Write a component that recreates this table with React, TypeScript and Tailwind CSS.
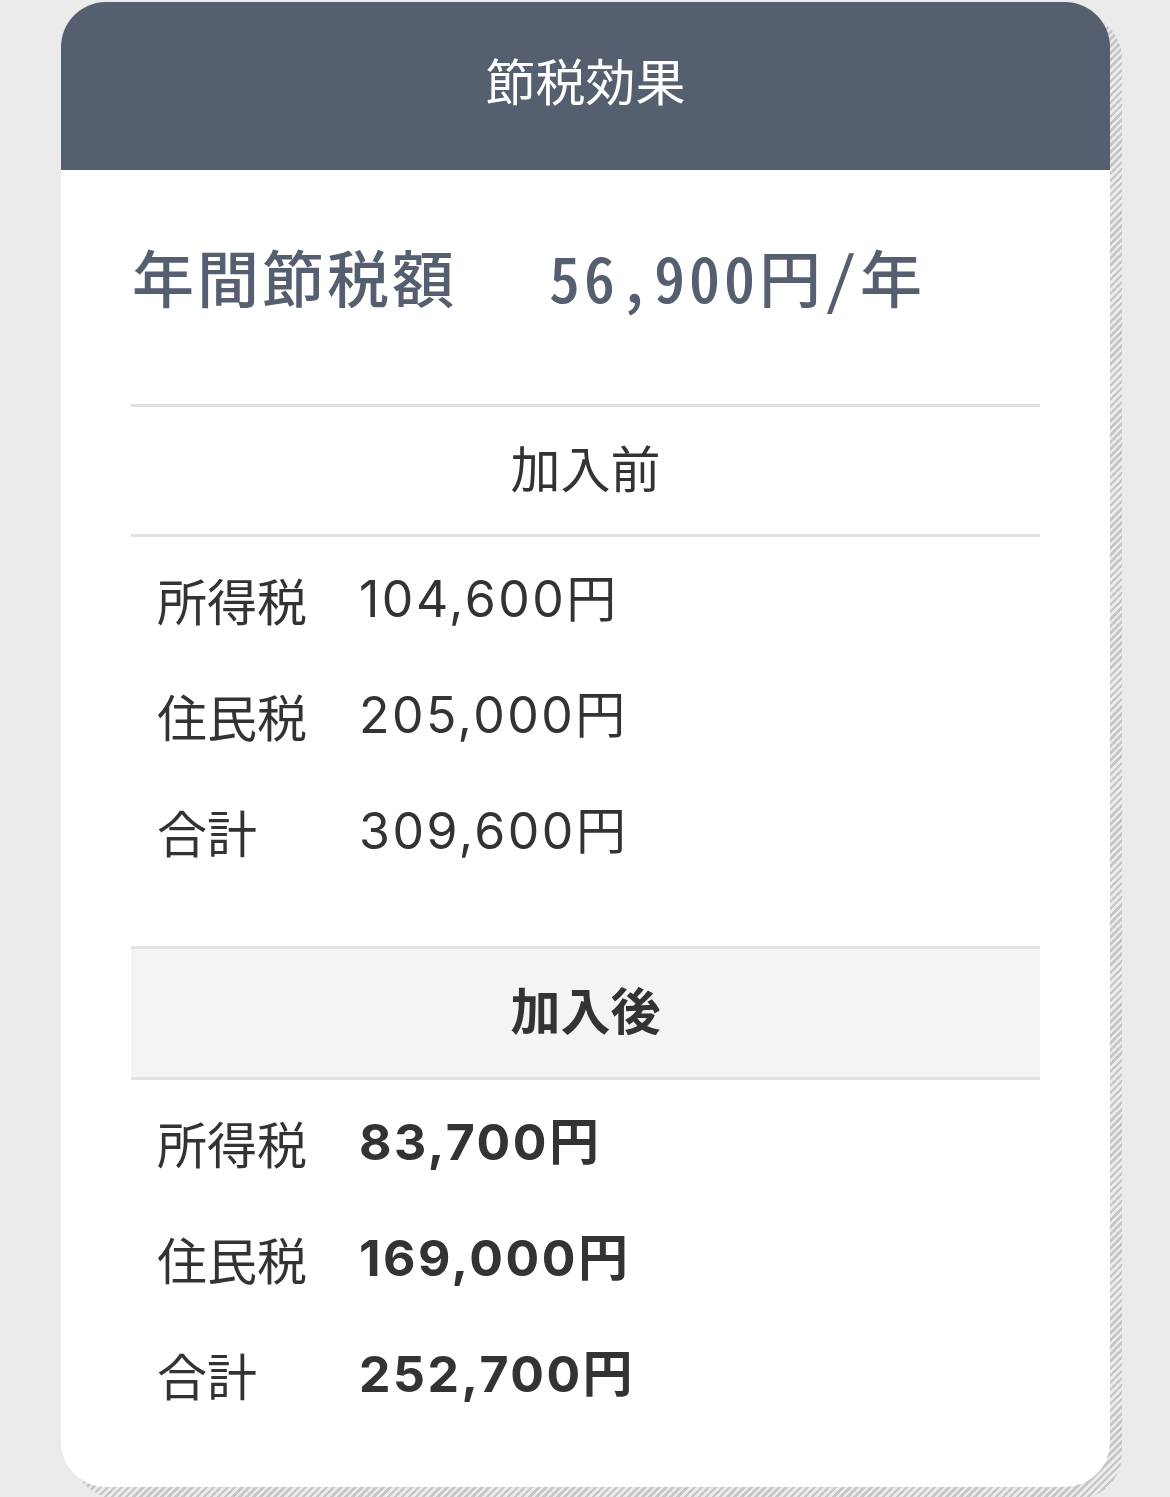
const jp = "font-['Noto_Sans_CJK_JP',sans-serif]";
const num = "font-['Inter','Noto_Sans_CJK_JP',sans-serif]";

type Row = { label: string; value: string };

const before: Row[] = [
  { label: "所得税", value: "104,600円" },
  { label: "住民税", value: "205,000円" },
  { label: "合計", value: "309,600円" },
];

const after: Row[] = [
  { label: "所得税", value: "83,700円" },
  { label: "住民税", value: "169,000円" },
  { label: "合計", value: "252,700円" },
];

function Rows({ rows, bold }: { rows: Row[]; bold?: boolean }) {
  return (
    <div className="pt-[4px]">
      {rows.map((r) => (
        <div key={r.label} className="flex items-center h-[116px] pl-[26px] text-[#333]">
          <span className={`${jp} w-[202px] text-[50px] leading-none`}>{r.label}</span>
          <span
            className={`${num} text-[50px] leading-none tracking-[2.5px] ${bold ? "font-bold" : "font-normal"}`}
          >
            {r.value}
          </span>
        </div>
      ))}
    </div>
  );
}

export default function App() {
  return (
    <div className="h-[1497px] overflow-hidden bg-[#ebebeb] pt-[2px] pl-[61px]">
      <div className="relative w-[1049px]">
        <div className="absolute inset-0 translate-x-[12px] translate-y-[12px] rounded-[45px] [background-image:repeating-linear-gradient(135deg,#c6c6c6_0_2.5px,transparent_2.5px_5px)]" />
        <div className="relative rounded-[45px] bg-white overflow-hidden">
          <div className="h-[168px] bg-[#565f70] flex items-center justify-center">
            <h1 className={`${jp} text-white text-[50px] leading-none pb-[14px]`}>節税効果</h1>
          </div>

          <div className="px-[70px] pb-[55px]">
            <div className="flex items-center h-[80px] mt-[68px] pb-[4px] pl-[1px] text-[#565f70]">
              <span className={`${jp} font-medium text-[62px] leading-none tracking-[3px]`}>年間節税額</span>
              <span
                className={`${jp} font-medium text-[62px] leading-none tracking-[4px] ml-[92px] [font-feature-settings:'hwid']`}
              >
                56,900円/年
              </span>
            </div>

            <div className="mt-[86px] border-t-[3px] border-b-[3px] border-[#e2e2e2] h-[133px] flex items-center justify-center pb-[10px]">
              <span className={`${jp} text-[50px] leading-none text-[#333]`}>加入前</span>
            </div>
            <Rows rows={before} />

            <div className="mt-[57px] border-t-[3px] border-b-[3px] border-[#e2e2e2] bg-[#f4f4f4] h-[134px] flex items-center justify-center pb-[10px]">
              <span className={`${jp} font-bold text-[50px] leading-none text-[#333]`}>加入後</span>
            </div>
            <Rows rows={after} bold />
          </div>
        </div>
      </div>
    </div>
  );
}
